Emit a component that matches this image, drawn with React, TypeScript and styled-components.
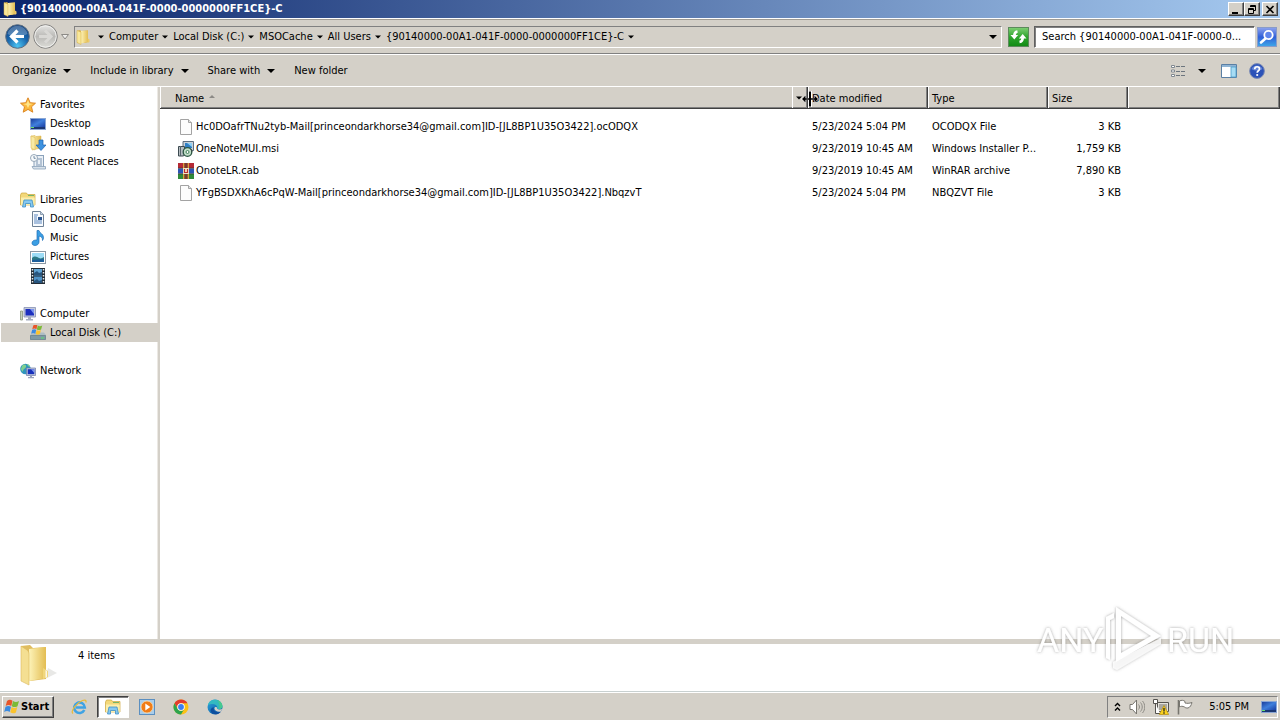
import React from "react";
import styled, { createGlobalStyle } from "styled-components";

const face = "#d4d0c8";
const font = `"DejaVu Sans Condensed", Tahoma, "DejaVu Sans", sans-serif`;

const GlobalStyle = createGlobalStyle`
  * { box-sizing: border-box; }
  body { margin: 0; background: #fff; color: #000; font: 11px/14px ${font}; }
  button, input { font: inherit; color: inherit; margin: 0; padding: 0; }
  button { border: 0; background: none; }
  svg { display: block; flex: none; }
`;

const Page = styled.div`
  display: flex;
  flex-direction: column;
  min-height: 100vh;
`;

/* ---------- title bar ---------- */

const TitleBar = styled.header`
  display: flex;
  align-items: center;
  height: 18px;
  padding: 0 2px;
  gap: 2px;
  background: linear-gradient(90deg, #0a246a, #a6caf0);
`;

const Title = styled.h1`
  flex: 1;
  margin: 0;
  font-size: 11px;
  line-height: 18px;
  color: #fff;
  white-space: nowrap;
`;

const WindowButtons = styled.div`
  display: flex;
`;

const WindowButton = styled.button<{ $apart?: boolean }>`
  display: grid;
  place-items: center;
  width: 16px;
  height: 14px;
  margin-left: ${(p) => (p.$apart ? 2 : 0)}px;
  background: ${face};
  border: 1px solid;
  border-color: #fff #404040 #404040 #fff;
  box-shadow: inset -1px -1px #808080;
`;

/* ---------- address bar ---------- */

const AddressBar = styled.div`
  display: flex;
  align-items: center;
  height: 36px;
  padding: 1px 3px 0 5px;
  background: ${face};
  border-top: 1px solid #fff;
  border-bottom: 1px solid #808080;
  box-shadow: inset 0 1px #a09c94;
`;

const NavButtons = styled.div`
  display: flex;
  align-items: center;
  gap: 3px;
  width: 69px;
`;

const AddressField = styled.nav`
  flex: 1;
  display: flex;
  align-items: center;
  height: 22px;
  margin-right: 6px;
  border: 1px solid;
  border-color: #808080 #fff #fff #808080;
`;

const Crumbs = styled.ol`
  flex: 1;
  display: flex;
  margin: 0;
  padding: 0 0 0 7px;
  list-style: none;
  white-space: nowrap;
`;

const Crumb = styled.li`
  display: flex;
  align-items: center;
  gap: 4px;
  padding-left: 5px;
  &:first-child { padding-left: 0; }
`;

const FieldArrow = styled.button`
  padding: 0 4px;
`;

const Refresh = styled.button`
  width: 21px;
  height: 20px;
  margin-right: 5px;
`;

const SearchField = styled.input`
  width: 221px;
  height: 22px;
  padding: 0 0 0 7px;
  border: 1px solid;
  border-color: #606060 #fff #fff #606060;
  box-shadow: inset 1px 1px #808080;
  background: #fff;
  &::placeholder { color: #000; opacity: 1; }
`;

const SearchButton = styled.button`
  width: 20px;
  height: 20px;
  margin-left: 2px;
`;

/* ---------- command bar ---------- */

const CommandBar = styled.div`
  display: flex;
  align-items: center;
  height: 33px;
  padding: 0 15px 0 12px;
  gap: 19px;
  background: ${face};
  border-top: 1px solid #fff;
  border-bottom: 1px solid #fff;
`;

const Command = styled.button`
  display: flex;
  align-items: center;
  gap: 7px;
  white-space: nowrap;
`;

const ViewTools = styled.div`
  display: flex;
  gap: 15px;
  margin-left: auto;
`;

const ToolPair = styled.div`
  display: flex;
  align-items: center;
  gap: 12px;
`;

/* ---------- body ---------- */

const Body = styled.main`
  flex: 1;
  display: flex;
`;

const Sidebar = styled.nav`
  width: 160px;
  padding-top: 8px;
  border-right: 2px solid ${face};
  box-shadow: inset -1px 0 #ece9e4;
`;

const Group = styled.ul`
  margin: 0 0 19px;
  padding: 0;
  list-style: none;
`;

const Place = styled.a<{ $child?: boolean; $current?: boolean }>`
  display: flex;
  align-items: center;
  gap: 4px;
  height: 19px;
  margin-left: 1px;
  padding-top: 1px;
  padding-left: ${(p) => (p.$child ? 29 : 19)}px;
  color: #000;
  text-decoration: none;
  background: ${(p) => (p.$current ? face : "none")};
`;

const Files = styled.section`
  flex: 1;
  min-width: 0;
`;

const FileTable = styled.table`
  width: 100%;
  table-layout: fixed;
  border-collapse: separate;
  border-spacing: 0;
`;

const Col = styled.col<{ $w?: number }>`
  width: ${(p) => (p.$w ? `${p.$w}px` : "auto")};
`;

const HeadCell = styled.th<{ $inset?: number }>`
  position: relative;
  height: 22px;
  padding: 2px 0 0 ${(p) => p.$inset ?? 4}px;
  background: ${face};
  border-right: 1px solid #404040;
  border-bottom: 1px solid #404040;
  box-shadow: inset 1px 0 #fff, inset -1px -1px #808080;
  font-weight: normal;
  text-align: left;
`;

const HeadLabel = styled.span`
  display: flex;
  gap: 5px;
`;

const FilterButton = styled.button`
  position: absolute;
  top: 0;
  right: 0;
  bottom: 0;
  width: 15px;
  padding-left: 3px;
  border-left: 1px solid #fff;
`;

const ResizePointer = styled.svg`
  position: absolute;
  top: 3px;
  right: -12px;
  z-index: 1;
`;

const Cell = styled.td<{ $right?: boolean }>`
  height: 22px;
  padding: 0 ${(p) => (p.$right ? 7 : 0)}px 0 4px;
  text-align: ${(p) => (p.$right ? "right" : "left")};
  white-space: nowrap;
`;

const Rows = styled.tbody`
  &::before { content: ""; display: table-row; height: 7px; }
`;

const FileName = styled.div`
  display: flex;
  align-items: center;
  gap: 2px;
  padding-left: 14px;
`;

/* ---------- details pane and taskbar ---------- */

const Details = styled.footer`
  position: relative;
  display: flex;
  height: 53px;
  gap: 20px;
  padding-left: 18px;
  border-top: 5px solid ${face};
  border-bottom: 1px solid #c8d0d0;
`;

const ItemCount = styled.p`
  margin: 5px 0 0;
`;

const Watermark = styled.svg`
  position: absolute;
  right: 43px;
  bottom: 16px;
`;

const Taskbar = styled.div`
  display: flex;
  align-items: center;
  height: 28px;
  padding: 0 2px;
  background: ${face};
  border-top: 1px solid #fff;
`;

const StartButton = styled.button`
  display: flex;
  align-items: center;
  gap: 1px;
  width: 52px;
  height: 22px;
  margin-right: 9px;
  padding-left: 1px;
  font-weight: bold;
  border: 1px solid;
  border-color: #fff #404040 #404040 #fff;
  box-shadow: inset -1px -1px #808080;
`;

const TaskButton = styled.button<{ $active?: boolean }>`
  display: grid;
  place-items: center;
  width: 32px;
  height: 22px;
  margin-right: 2px;
  background: ${(p) => (p.$active ? "#fff" : "none")};
  border: 1px solid;
  border-color: ${(p) => (p.$active ? "#404040 #fff #fff #404040" : "transparent")};
  box-shadow: ${(p) => (p.$active ? "inset 1px 1px #808080" : "none")};
`;

const Tray = styled.div`
  display: flex;
  align-items: center;
  height: 22px;
  margin-left: auto;
  padding-left: 6px;
  gap: 8px;
  border: 1px solid;
  border-color: #808080 #fff #fff #808080;
`;

const Clock = styled.time`
  padding: 0 4px 0 8px;
`;

/* ---------- drawings ---------- */

const Arrow = ({ size = 7 }: { size?: number }) => (
  <svg width={size} height="4" viewBox="0 0 8 4" aria-hidden="true"><path d="M0 0h8L4 4z" /></svg>
);

const Icon = ({ children, size = 16 }: { children: React.ReactNode; size?: number }) => (
  <svg width={size} height={size} viewBox="0 0 16 16" aria-hidden="true">{children}</svg>
);

const Gradients = () => (
  <svg width="0" height="0" aria-hidden="true">
    <defs>
      <linearGradient id="folder" x1="0" x2="1"><stop offset="0" stopColor="#fdf3b8" /><stop offset="1" stopColor="#e3bd52" /></linearGradient>
      <linearGradient id="screen" x1="0" y1="0" x2="1" y2="1"><stop offset="0" stopColor="#1c3f9c" /><stop offset=".5" stopColor="#3f7fdc" /><stop offset="1" stopColor="#1a3fa4" /></linearGradient>
      <radialGradient id="orb" cx=".5" cy=".9" r=".9"><stop offset="0" stopColor="#4cc4f2" /><stop offset=".5" stopColor="#1a68ae" /><stop offset="1" stopColor="#10407e" /></radialGradient>
      <linearGradient id="pale" x1="0" y1="0" x2="0" y2="1"><stop offset="0" stopColor="#e6e6e4" /><stop offset=".5" stopColor="#bab9b6" /><stop offset="1" stopColor="#deded9" /></linearGradient>
      <linearGradient id="green" x1="0" y1="0" x2="0" y2="1"><stop offset="0" stopColor="#7fcf74" /><stop offset=".5" stopColor="#2da52c" /><stop offset="1" stopColor="#118a14" /></linearGradient>
      <linearGradient id="find" x1="0" y1="0" x2="0" y2="1"><stop offset="0" stopColor="#8fa4ee" /><stop offset=".5" stopColor="#2f5fd8" /><stop offset="1" stopColor="#3fa8e8" /></linearGradient>
      <linearGradient id="edge" x1="0" y1="0" x2="1" y2="1"><stop offset="0" stopColor="#2aa6dc" /><stop offset="1" stopColor="#0c4fa0" /></linearGradient>
    </defs>
  </svg>
);

const Folder = ({ size = 16 }: { size?: number }) => (
  <Icon size={size}>
    <path d="M2 2l3-1 1 1 7-.5V13l-3 1H2z" fill="#d9b24c" />
    <path d="M6 2l7-.5V13l-7 1.5z" fill="url(#folder)" />
    <path d="M2 1.500l4 1.500v12.500l-4-2z" fill="#f8e79a" stroke="#d6ac41" strokeWidth=".5" />
    <path d="M13 9.500l1.500 1v2.500l-2 1z" fill="#ecca68" />
  </Icon>
);

const LargeFolder = () => (
  <svg width="40" height="42" viewBox="0 0 40 42" aria-hidden="true">
    <path d="M27 35l12-6-9-5z" fill="#d9d9d6" opacity=".6" />
    <path d="M3 2l9-1 3 3 13-1V35l-16 2z" fill="#e0bd60" />
    <path d="M11 5l17-2v31l-17 3z" fill="url(#folder)" />
    <path d="M3 2l6 4c1 1 2 2 2 4v31l-8-4z" fill="#f4df92" stroke="#dcb95c" strokeWidth=".6" />
    <path d="M25 24l5 3v6l-5 2z" fill="#f0d67c" />
    <path d="M27.500 26l1.500 1v6l-1.500 1z" fill="#fff" opacity=".8" />
  </svg>
);

const Star = () => (
  <Icon><path d="M8 .8l2.200 4.900 5.300.500-4 3.600 1.300 5.400L8 12.400l-4.800 2.800 1.300-5.400-4-3.600 5.300-.5z" fill="#fcb83c" stroke="#d9801c" strokeWidth=".9" /><path d="M8 3l1.300 3.600L13 7 9.500 8 8 11 6.500 8 3 7l3.700-.4z" fill="#ffe58a" /></Icon>
);

const Screen = () => (
  <Icon>
    <rect x="0" y="2" width="16" height="12" fill="#8aa6d4" />
    <rect x="1" y="3" width="14" height="8" fill="url(#screen)" />
    <rect x="1" y="11" width="14" height="2" fill="#1b3772" />
    <path d="M1 11.500h3" stroke="#6be06b" />
  </Icon>
);

const Downloads = () => (
  <Icon>
    <path d="M1 1l4-.5 1 1 5-.5v12l-9 2z" fill="url(#folder)" stroke="#d8b14a" strokeWidth=".5" />
    <path d="M1 1l4 1.500V15l-4-2z" fill="#f9eaa4" stroke="#d8b14a" strokeWidth=".5" />
    <path d="M9 5h4v5h3l-5 5.500L6 10h3z" fill="#3d92e0" stroke="#1c62b0" strokeWidth=".7" />
  </Icon>
);

const Recent = () => (
  <Icon>
    <rect x="4" y="1.500" width="9.500" height="12" fill="#eaf0f6" stroke="#8ba2ba" />
    <path d="M7 5h5M6 7h2m2 0h2M6 9h2m2 0h2M6 11h6" stroke="#7d95b2" />
    <path d="M2 12.500h13.500v2.500H3.500z" fill="#d8e1ea" stroke="#8ba2ba" strokeWidth=".8" />
    <circle cx="4" cy="4" r="3.500" fill="#f7fafc" stroke="#97a8b8" />
    <path d="M4 2v2.300h1.700" stroke="#52708e" fill="none" strokeWidth=".8" />
  </Icon>
);

const Libraries = () => (
  <Icon>
    <path d="M.5 3l1-2h5l1 1.500h7.500V13H.5z" fill="#f3d879" stroke="#cda63c" strokeWidth=".7" />
    <path d="M1 5.500h13.700V13H1z" fill="#fbeeac" />
    <path d="M8 3.500h6" stroke="#74b56a" />
    <path d="M2.500 15l1.500-7h8l1.500 7h-3v-3.500h-5V15z" fill="#86c8f0" stroke="#3d8fc6" strokeWidth=".8" />
  </Icon>
);

const Documents = () => (
  <Icon>
    <path d="M2.500.5h8l3 3v12h-11z" fill="#f8fbfe" stroke="#6e8196" />
    <path d="M10.500.5v3h3" fill="#c5d4e4" stroke="#6e8196" strokeWidth=".7" />
    <path d="M4 4h4M4 6h3M4 8h3M4 10h8M4 12h8" stroke="#5b86bf" />
    <rect x="8" y="6" width="4" height="3" fill="#2b5590" />
  </Icon>
);

const Music = () => (
  <Icon><path d="M7 .5h2c.5 3 4.500 3 4.500 7 0 1.200-.3 2-1 3 .2-3-1.500-4-3.500-4.500v6c0 2-1.800 3.500-4 3.500-1.800 0-3-.9-3-2.400C2 11 4 9.800 7 10z" fill="#3b9fe4" stroke="#1d6fb8" strokeWidth=".7" /></Icon>
);

const Pictures = () => (
  <Icon>
    <rect x=".5" y="2.500" width="15" height="12" fill="#fff" stroke="#8c98a4" />
    <rect x="2" y="4" width="12" height="9" fill="#9ddcf6" />
    <path d="M2 9c3-3 5-1 7 0s3 0 5-1v5H2z" fill="#2c7a86" />
    <path d="M2 11l12-1v3H2z" fill="#1d5f9c" />
  </Icon>
);

const Videos = () => (
  <Icon>
    <rect x="1" y="0" width="14" height="16" fill="#222c36" />
    <path d="M2.500 1v15M13.500 1v15" stroke="#e6ebef" strokeWidth="1.500" strokeDasharray="1.500 1.500" />
    <rect x="4" y="1" width="8" height="6.500" fill="#5fa3d4" />
    <rect x="4" y="8.500" width="8" height="6.500" fill="#4f93c8" />
    <path d="M4 5l3-2 2 2 3-1v3.500H4zM4 13l3-2 2 2 3-1v3H4z" fill="#27557e" />
  </Icon>
);

const Computer = () => (
  <Icon>
    <path d="M.5 5h2v9h-2z" fill="#c9d2be" stroke="#8a957c" strokeWidth=".8" />
    <path d="M4 1.500h11.500V11H4z" fill="#c4cadb" stroke="#8791b4" strokeWidth=".8" />
    <path d="M5.500 3H14v6.500H5.500z" fill="#1c2fbe" />
    <path d="M10 3h4v5z" fill="#7a93ee" />
    <path d="M8 11h3v2H8zM6 13h7v1.500H6z" fill="#a6adc0" />
  </Icon>
);

const WindowsFlag = () => (
  <>
    <path d="M3 2c2-1.500 3.500-1.500 5.500-.3L7.300 7C5.300 5.800 3.700 5.800 1.700 7z" fill="#e8562a" />
    <path d="M9 2c2 1.200 3.700 1.200 6 0l-1.500 5.200c-2 1.200-3.700 1.200-5.700 0z" fill="#7cba35" />
    <path d="M1.500 7.800c2-1.200 3.700-1.200 5.500 0L5.700 13c-2-1.200-3.500-1.200-5.500 0z" fill="#3b8be0" />
    <path d="M7.600 8.100c2 1.200 3.700 1.200 5.700 0l-1.400 5.300c-2 1.200-3.500 1.200-5.600-.1z" fill="#fbc32d" />
  </>
);

const Disk = () => (
  <Icon>
    <path d="M0 10l3-2.500h11l2 2.500v5H0z" fill="#aebdc4" />
    <path d="M.5 10.500h15v4H.5z" fill="#7f9aa4" stroke="#5d7680" strokeWidth=".6" />
    <path d="M11 13h3" stroke="#59e06d" />
    <g transform="translate(1 -1) scale(.75)"><WindowsFlag /></g>
  </Icon>
);

const Network = () => (
  <Icon>
    <circle cx="5.500" cy="6" r="5.300" fill="#2f94bd" />
    <path d="M2 3c2-3 5-1 4 1S3 6 3 8 1 7 1 6zM7 1c2 0 3 2 3 3L8 3z" fill="#7fd08f" />
    <path d="M6.500 5h9v7.500h-9z" fill="#c4cadb" stroke="#6b78a8" strokeWidth=".7" />
    <path d="M7.700 6.200h6.600v5H7.700z" fill="#1730bc" />
    <path d="M11 6.200h3.300V10z" fill="#7a93ee" />
    <path d="M10 12.500h2v1.500h2v1.200H8V14h2z" fill="#9aa3bd" />
  </Icon>
);

const BlankFile = () => (
  <Icon><path d="M2.500.5h8l3 3v12h-11z" fill="#fcfcfc" stroke="#a3a3a3" /><path d="M10.500.5v3h3" fill="#e4e4e4" stroke="#a3a3a3" /></Icon>
);

const Installer = () => (
  <Icon>
    <path d="M5 .5h10.500v9H5z" fill="#c9d0d8" stroke="#4d5f70" strokeWidth=".9" />
    <path d="M7 2h7v5H7z" fill="#2f7fc4" /><path d="M9 2h5v4z" fill="#8fd0f4" />
    <path d="M.5 5.500h6v8l-1 1.500h-5z" fill="#b5bcc0" stroke="#3c4a50" />
    <path d="M2.500 5v10" stroke="#59666c" />
    <circle cx="9.500" cy="11" r="4.300" fill="#c2dfc8" stroke="#2b5542" strokeWidth="1.300" />
    <circle cx="9.500" cy="11" r="1.500" fill="#fff" stroke="#3f7f58" />
    <path d="M13 8l1 3" stroke="#3a4a44" />
  </Icon>
);

const Archive = () => (
  <Icon>
    <path d="M0 0h16v5H0z" fill="#b52a35" /><path d="M0 5.500h16v5H0z" fill="#2c55b4" /><path d="M0 11h16v5H0z" fill="#2f8a3a" />
    <path d="M0 5.200h16M0 10.800h16" stroke="#26221e" strokeWidth=".7" />
    <path d="M5 0h1.500v16H5zM9.500 0H11v16H9.500z" fill="#d9a43c" />
    <path d="M6.500 0h3v16h-3z" fill="#7c3a2e" />
    <path d="M5 5h6v6H5z" fill="#f1e6c4" /><path d="M6.500 6v3.500h3V6" stroke="#bd2f2f" fill="none" strokeWidth="1.200" />
  </Icon>
);

const Back = () => (
  <svg width="25" height="25" viewBox="0 0 25 25" aria-hidden="true">
    <circle cx="12.500" cy="12.500" r="11.800" fill="url(#orb)" stroke="#5f6f80" />
    <path d="M2.500 10a10.200 10.200 0 0 1 20 0c-6 3-14 3-20 0z" fill="#fff" opacity=".25" />
    <path d="M12.500 6.500l-6 6 6 6M7 12.500H19" fill="none" stroke="#fff" strokeWidth="3.200" />
  </svg>
);

const Forward = () => (
  <svg width="25" height="25" viewBox="0 0 25 25" aria-hidden="true">
    <circle cx="12.500" cy="12.500" r="11.800" fill="url(#pale)" stroke="#858482" />
    <circle cx="12.500" cy="12.500" r="10.700" fill="none" stroke="#f0f0ee" />
    <path d="M12 6.500l6 6-6 6M17.500 12.500H6" fill="none" stroke="#d9d8d5" strokeWidth="3" />
  </svg>
);

const RefreshIcon = () => (
  <svg width="21" height="20" viewBox="0 0 21 20" aria-hidden="true">
    <rect x=".5" y=".5" width="20" height="19" fill="url(#green)" stroke="#5c8a5c" />
    <path d="M9.500 4.500Q6.300 5 6.300 9M11.500 15Q14.700 14.500 14.700 10.500" fill="none" stroke="#fff" strokeWidth="2.600" />
    <path d="M2.500 8h7.600l-3.800 4.500zM10.900 11.500h7.600L14.700 7z" fill="#fff" />
  </svg>
);

const SearchIcon = () => (
  <svg width="20" height="20" viewBox="0 0 20 20" aria-hidden="true">
    <rect x=".5" y=".5" width="19" height="19" fill="url(#find)" stroke="#8a9cc8" />
    <circle cx="11.500" cy="8" r="4.200" fill="#5f86ec" stroke="#fff" strokeWidth="1.800" />
    <path d="M8.500 11.500L4 15.500" stroke="#fff" strokeWidth="2.600" strokeLinecap="round" />
  </svg>
);

const ListView = () => (
  <Icon>
    <path d="M1.500 2.500h3v2h-3zM1.500 7h3v2h-3zM1.500 11.500h3v2h-3z" fill="#fff" stroke="#808890" />
    <path d="M6 3.500h4m1 0h4M6 8.500h4m1 0h4M6 12.500h4m1 0h4" stroke="#6c757e" />
  </Icon>
);

const PreviewPane = () => (
  <Icon>
    <path d="M.5 1.500h15v13H.5z" fill="#fff" stroke="#5a7fa4" />
    <path d="M1 2h14v2H1z" fill="#8fb4d4" /><path d="M10 4h5v10h-5z" fill="#a7dcf4" stroke="#4c9cc8" strokeWidth=".8" />
  </Icon>
);

const Help = () => (
  <Icon>
    <circle cx="8" cy="8" r="7.400" fill="#2c52b8" stroke="#7d8cb4" />
    <path d="M2.500 6a6 6 0 0 1 11 0c-3 2-8 2-11 0z" fill="#8ba6ea" opacity=".6" />
    <path d="M5.700 6.200c0-3.200 4.800-3.200 4.800-.3 0 1.900-2.300 1.800-2.300 3.800" fill="none" stroke="#fff" strokeWidth="1.700" />
    <circle cx="8.200" cy="12" r="1.100" fill="#fff" />
  </Icon>
);

const InternetExplorer = () => (
  <Icon>
    <path d="M13.300 11A5.300 5.300 0 1 1 13.800 8.500H5" fill="none" stroke="#3fa3e4" strokeWidth="2.600" />
    <path d="M2 14.500C-1 12 6 3.500 11.500 1.500c3-1 4 0 3.300 2" fill="none" stroke="#e8bb3c" strokeWidth="1.300" />
  </Icon>
);

const MediaPlayer = () => (
  <Icon>
    <rect x=".5" y=".5" width="15" height="15" fill="#a9cdea" stroke="#5b8fc0" />
    <circle cx="8" cy="8" r="6" fill="#f07c16" stroke="#fbd9a8" strokeWidth=".8" /><path d="M6.300 4.500l5 3.500-5 3.500z" fill="#fff" />
  </Icon>
);

const Chrome = () => (
  <Icon>
    <circle cx="8" cy="8" r="7.500" fill="#fbc116" />
    <path d="M1.500 4.250A7.500 7.500 0 0 1 14.500 4.250H8A3.750 3.750 0 0 0 4.700 9.800z" fill="#e33b2e" />
    <path d="M1.500 4.250A7.500 7.500 0 0 0 8 15.500l3.250-5.600A3.750 3.750 0 0 1 4.750 9.900z" fill="#2da44e" />
    <circle cx="8" cy="8" r="3.750" fill="#fff" /><circle cx="8" cy="8" r="2.900" fill="#3d7ff0" />
  </Icon>
);

const Edge = () => (
  <Icon>
    <circle cx="8" cy="8" r="7.500" fill="url(#edge)" />
    <path d="M1 6C2.500-1 14-1.500 15.500 7c.2 3-3.500 4-5.500 2.500C11.500 6 6 3.500 1 6z" fill="#35bfc0" opacity=".9" />
    <path d="M10 1c3.500.8 5.300 3.500 5.500 6 .2 2-1.500 3-3.300 3C13 6 12 3 10 1z" fill="#4fd27c" opacity=".7" />
    <path d="M10 9.500c1.500 1.500 4 1 5.300.5-.3 1-.8 1.800-1.300 2.400-3 .9-6.500-.4-6.600-3.100C8 7 10.500 8 10 9.500z" fill="#d4d0c8" />
    <path d="M7 8.300c-1.300 3.200 2 6 6.500 4.600-2 2.700-6.500 3.100-9 .9C2.500 11.500 4 8.500 7 8.300z" fill="#0d4e9e" />
  </Icon>
);

const Chevrons = () => (
  <svg width="7" height="10" viewBox="0 0 7 10" aria-hidden="true"><path d="M1 4l2.500-2.500L6 4M1 8.500L3.500 6 6 8.500" fill="none" stroke="#000" strokeWidth="1.400" /></svg>
);

const Speaker = () => (
  <Icon>
    <path d="M1 5.500h2.500L7.500 1v14l-4-4.500H1z" fill="#fff" stroke="#77756f" />
    <path d="M9.500 5.500c1.300 1.500 1.300 3.500 0 5M11.500 3.500c2.300 2.700 2.300 6.300 0 9M13.500 2c3 3.500 3 8.500 0 12" fill="none" stroke="#8d8b85" />
  </Icon>
);

const NetworkAlert = () => (
  <Icon>
    <path d="M4.500 3.500h11v9h-11z" fill="#e4e2dc" stroke="#55534f" /><path d="M6 5h8v6H6z" fill="#aaa8a2" />
    <path d="M.5.500h4v4h-4zM2.500 4v10.500H7" fill="#fff" stroke="#55534f" />
    <path d="M11 6.500l4.700 9H6.300z" fill="#fbd21c" stroke="#b48c10" strokeWidth=".7" /><path d="M11 9v3.500M11 13.300v1.400" stroke="#222" strokeWidth="1.300" />
  </Icon>
);

const Flag = () => (
  <Icon>
    <path d="M1.500 1v14.500" stroke="#77756f" strokeWidth="1.600" />
    <path d="M2.500 2c2-1 4-1 5.500.5V4c2 .5 4 .5 7-.5-1 3-1.500 4.500-4 5.500-1.500 0-2.500 0-3.500-1-2-1-3.500-1-5 0z" fill="#fff" stroke="#77756f" />
  </Icon>
);

/* ---------- content ---------- */

const crumbs = ["Computer", "Local Disk (C:)", "MSOCache", "All Users", "{90140000-00A1-041F-0000-0000000FF1CE}-C"];

type PlaceItem = { label: string; icon: React.ReactNode; current?: boolean };

const places: PlaceItem[][] = [
  [
    { label: "Favorites", icon: <Star /> },
    { label: "Desktop", icon: <Screen /> },
    { label: "Downloads", icon: <Downloads /> },
    { label: "Recent Places", icon: <Recent /> },
  ],
  [
    { label: "Libraries", icon: <Libraries /> },
    { label: "Documents", icon: <Documents /> },
    { label: "Music", icon: <Music /> },
    { label: "Pictures", icon: <Pictures /> },
    { label: "Videos", icon: <Videos /> },
  ],
  [
    { label: "Computer", icon: <Computer /> },
    { label: "Local Disk (C:)", icon: <Disk />, current: true },
  ],
  [{ label: "Network", icon: <Network /> }],
];

const files = [
  { icon: <BlankFile />, name: "Hc0DOafrTNu2tyb-Mail[princeondarkhorse34@gmail.com]ID-[JL8BP1U35O3422].ocODQX", date: "5/23/2024 5:04 PM", type: "OCODQX File", size: "3 KB" },
  { icon: <Installer />, name: "OneNoteMUI.msi", date: "9/23/2019 10:45 AM", type: "Windows Installer P...", size: "1,759 KB" },
  { icon: <Archive />, name: "OnoteLR.cab", date: "9/23/2019 10:45 AM", type: "WinRAR archive", size: "7,890 KB" },
  { icon: <BlankFile />, name: "YFgBSDXKhA6cPqW-Mail[princeondarkhorse34@gmail.com]ID-[JL8BP1U35O3422].NbqzvT", date: "5/23/2024 5:04 PM", type: "NBQZVT File", size: "3 KB" },
];

export default function App() {
  return (
    <Page>
      <GlobalStyle />
      <TitleBar>
        <Folder />
        <Title>{"{90140000-00A1-041F-0000-0000000FF1CE}-C"}</Title>
        <WindowButtons>
          <WindowButton aria-label="Minimize"><svg width="10" height="9"><path d="M1 7h6v2H1z" /></svg></WindowButton>
          <WindowButton aria-label="Restore"><svg width="10" height="9"><path d="M3.500 1v-.5h5v5H7M3 1.500h6M1.500 3.500h5v5h-5zM1 4.500h6" fill="none" stroke="#000" /></svg></WindowButton>
          <WindowButton aria-label="Close" $apart><svg width="10" height="9"><path d="M1.500 1l7 7M8.500 1l-7 7" stroke="#000" strokeWidth="1.600" /></svg></WindowButton>
        </WindowButtons>
      </TitleBar>

      <AddressBar>
        <NavButtons>
          <button aria-label="Back"><Back /></button>
          <button aria-label="Forward"><Forward /></button>
          <button aria-label="Recent pages"><svg width="8" height="6"><path d="M.5.500h7L4 5z" fill="#efeeec" stroke="#8c8a86" /></svg></button>
        </NavButtons>
        <AddressField aria-label="Address">
          <Folder />
          <Crumbs>
            <Crumb><Arrow size={6} /></Crumb>
            {crumbs.map((c) => (
              <Crumb key={c}><button>{c}</button><Arrow size={6} /></Crumb>
            ))}
          </Crumbs>
          <FieldArrow aria-label="Previous locations"><Arrow size={8} /></FieldArrow>
        </AddressField>
        <Refresh aria-label="Refresh"><RefreshIcon /></Refresh>
        <SearchField type="text" aria-label="Search" placeholder="Search {90140000-00A1-041F-0000-0..." />
        <SearchButton aria-label="Start search"><SearchIcon /></SearchButton>
      </AddressBar>

      <CommandBar>
        <Command>Organize<Arrow size={8} /></Command>
        <Command>Include in library<Arrow size={8} /></Command>
        <Command>Share with<Arrow size={8} /></Command>
        <Command>New folder</Command>
        <ViewTools>
          <ToolPair>
            <button aria-label="Change view"><ListView /></button>
            <button aria-label="More view options"><Arrow size={8} /></button>
          </ToolPair>
          <ToolPair>
            <button aria-label="Preview pane"><PreviewPane /></button>
            <button aria-label="Help"><Help /></button>
          </ToolPair>
        </ViewTools>
      </CommandBar>

      <Body>
        <Sidebar aria-label="Places">
          {places.map((group) => (
            <Group key={group[0].label}>
              {group.map((p, i) => (
                <li key={p.label}>
                  <Place href="#" $child={i > 0} $current={p.current}>{p.icon}{p.label}</Place>
                </li>
              ))}
            </Group>
          ))}
        </Sidebar>
        <Files>
          <FileTable>
            <colgroup><Col $w={648} /><Col $w={120} /><Col $w={120} /><Col $w={80} /><Col /></colgroup>
            <thead>
              <tr>
                <HeadCell $inset={15}>
                  <HeadLabel>Name<svg width="6" height="8"><path d="M0 6h6L3 3z" fill="#8c8a86" /></svg></HeadLabel>
                  <FilterButton aria-label="Filter by name"><Arrow size={6} /></FilterButton>
                  <ResizePointer width="18" height="18" viewBox="0 0 18 18" aria-hidden="true">
                    <path d="M0 9l5-4v3h2V1h4v7h2V5l5 4-5 4v-3h-2v7H7v-7H5v3z" fill="#fff" />
                    <path d="M1 9l3.500-3.500V8.200H8V1.500h2v6.700h3.500V5.500L17 9l-3.500 3.500V9.800H10v6.700H8V9.800H4.500v2.700z" />
                  </ResizePointer>
                </HeadCell>
                <HeadCell>Date modified</HeadCell>
                <HeadCell>Type</HeadCell>
                <HeadCell>Size</HeadCell>
                <HeadCell />
              </tr>
            </thead>
            <Rows>
              {files.map((f) => (
                <tr key={f.name}>
                  <Cell><FileName>{f.icon}{f.name}</FileName></Cell>
                  <Cell>{f.date}</Cell>
                  <Cell>{f.type}</Cell>
                  <Cell $right>{f.size}</Cell>
                  <Cell />
                </tr>
              ))}
            </Rows>
          </FileTable>
        </Files>
      </Body>

      <Details>
        <LargeFolder />
        <ItemCount>4 items</ItemCount>
        <Watermark width="204" height="72" viewBox="0 0 204 72" role="img" aria-label="ANY RUN">
          <defs>
            <filter id="glow" x="-10%" y="-10%" width="120%" height="120%">
              <feDropShadow dx="0" dy="0" stdDeviation="1.800" floodColor="#666" floodOpacity=".6" />
            </filter>
          </defs>
          <g filter="url(#glow)" fill="#fff" fontFamily="Roboto, sans-serif" fontSize="34">
            <text x="4" y="49">ANY</text>
            <text x="134" y="49">RUN</text>
            <path d="M73 14l8-4v5l-4 2v40l-4-2z" />
            <path d="M83 4l45 29-45 26zM88 13v37l30-17z" fillRule="evenodd" />
            <path d="M80 59l48-24v6L84 67l-4-2z" opacity=".8" />
          </g>
        </Watermark>
      </Details>

      <Taskbar>
        <StartButton><Icon><WindowsFlag /></Icon>Start</StartButton>
        <TaskButton aria-label="Internet Explorer"><InternetExplorer /></TaskButton>
        <TaskButton aria-label="Explorer" $active><Libraries /></TaskButton>
        <TaskButton aria-label="Media Player"><MediaPlayer /></TaskButton>
        <TaskButton aria-label="Chrome"><Chrome /></TaskButton>
        <TaskButton aria-label="Edge"><Edge /></TaskButton>
        <Tray>
          <Chevrons />
          <Speaker />
          <NetworkAlert />
          <Flag />
          <Clock>5:05 PM</Clock>
          <Screen />
        </Tray>
      </Taskbar>
      <Gradients />
    </Page>
  );
}
